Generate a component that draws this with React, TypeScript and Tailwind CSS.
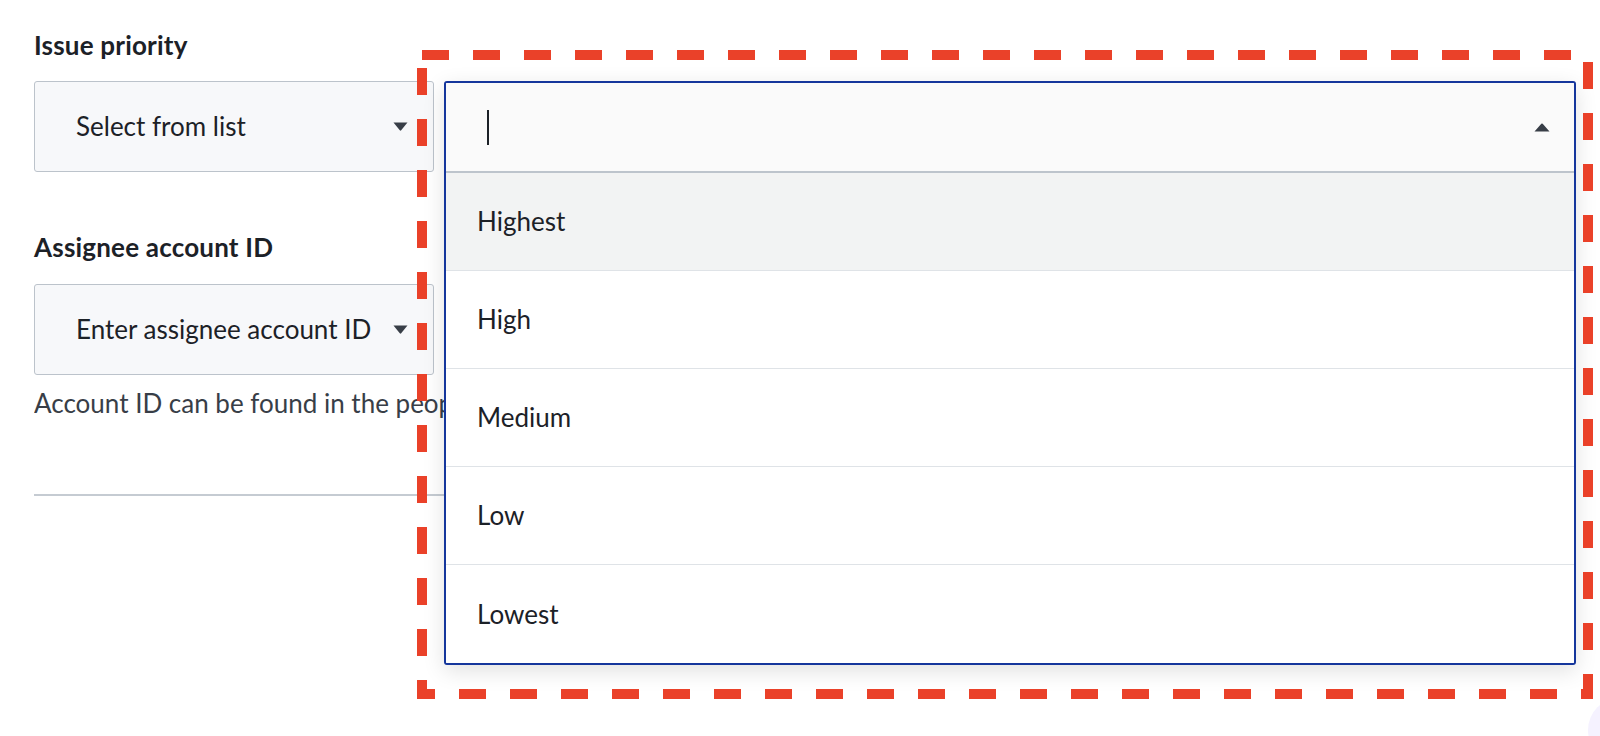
import React from "react";

const options = ["Highest", "High", "Medium", "Low", "Lowest"];

const CaretDown = () => (
  <svg width="15" height="9" viewBox="0 0 15 9" className="shrink-0">
    <path d="M0.5 0.5 H14.5 L8.2 8.3 Q7.5 9 6.8 8.3 Z" fill="#383e47" />
  </svg>
);

const CaretUp = () => (
  <svg width="16" height="9" viewBox="0 0 16 9" className="shrink-0">
    <path d="M0.5 8.5 H15.5 L8.7 0.8 Q8 0 7.3 0.8 Z" fill="#383e47" />
  </svg>
);

const SelectBox = ({ placeholder }: { placeholder: string }) => (
  <div className="flex h-[91px] w-[400px] items-center justify-between rounded-[3px] border-[1.5px] border-[#bcc3cb] bg-[#f7f8fa] pl-[41px] pr-[25px]">
    <span className="text-[26px] text-[#1c2127]">{placeholder}</span>
    <CaretDown />
  </div>
);

export default function App() {
  return (
    <div
      className="relative h-[736px] w-[1600px] overflow-hidden bg-white"
      style={{ fontFamily: "Lato, 'Noto Sans', sans-serif" }}
    >
      {/* Form */}
      <div className="flex flex-col pl-[34px] pt-[29px]">
        <div className="text-[26px] font-bold leading-[32px] tracking-[0.2px] text-[#1c2127]">
          Issue priority
        </div>
        <div className="mt-[20px]">
          <SelectBox placeholder="Select from list" />
        </div>

        <div className="mt-[59px] text-[26px] font-bold leading-[32px] tracking-[0.2px] text-[#1c2127]">
          Assignee account ID
        </div>
        <div className="mt-[21px]">
          <SelectBox placeholder="Enter assignee account ID" />
        </div>
        {/* helper text runs under the popover, so clip it at its edge */}
        <div className="mt-[12px] w-[410px] overflow-hidden whitespace-nowrap text-[26px] leading-[32px] text-[#383e47]">
          Account ID can be found in the people
        </div>
        <div className="mt-[75px] h-[2px] w-[700px] bg-[#c5cbd2]" />
      </div>

      {/* Open dropdown popover */}
      <div className="absolute left-[444px] top-[81px] w-[1132px] overflow-hidden rounded-[3px] border-2 border-[#15369c] bg-white shadow-[0_6px_22px_rgba(0,0,0,0.12)]">
        <div className="flex h-[88px] items-center justify-between bg-[#fafafa] pl-[41px] pr-[24px]">
          <div className="h-[35px] w-[2px] bg-[#1c2127]" />
          <CaretUp />
        </div>
        <div className="h-[2px] bg-[#bdc4cc]" />
        {options.map((o, i) => (
          <div
            key={o}
            className={
              "flex h-[98px] items-center pl-[31px] text-[26px] text-[#1c2127] " +
              (i === 0 ? "bg-[#f2f3f3] " : "bg-white ") +
              (i < options.length - 1 ? "border-b border-[#dfe3e7]" : "")
            }
          >
            {o}
          </div>
        ))}
      </div>

      {/* Annotation outline */}
      <svg
        className="pointer-events-none absolute left-0 top-0"
        width="1600"
        height="736"
      >
        <rect
          x="422"
          y="55"
          width="1166"
          height="639"
          fill="none"
          stroke="#ea4129"
          strokeWidth="10"
          strokeDasharray="27 24"
        />
      </svg>

      {/* faint bubble in corner */}
      <div className="absolute left-[1588px] top-[698px] h-[64px] w-[64px] rounded-full bg-[#f5f2ff]" />
    </div>
  );
}
